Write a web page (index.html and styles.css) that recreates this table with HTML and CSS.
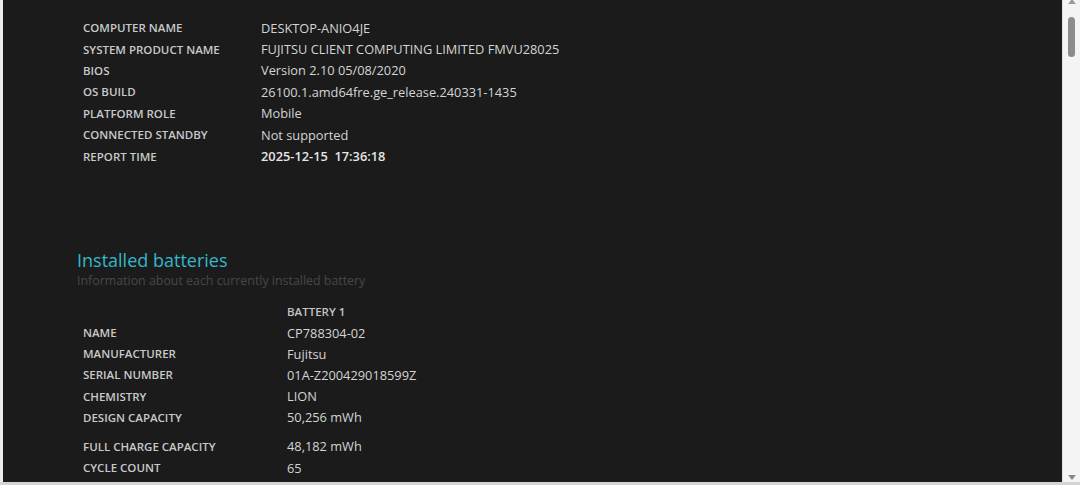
FILE: index.html
```html
<!DOCTYPE html>
<html>
<head>
<meta charset="utf-8">
<link rel="stylesheet" href="styles.css">
</head>
<body>
<div class="frame">
  <div class="page">
    <div class="info">
      <div class="label">COMPUTER NAME</div><div class="value">DESKTOP-ANIO4JE</div>
      <div class="label">SYSTEM PRODUCT NAME</div><div class="value">FUJITSU CLIENT COMPUTING LIMITED FMVU28025</div>
      <div class="label">BIOS</div><div class="value">Version 2.10 05/08/2020</div>
      <div class="label">OS BUILD</div><div class="value">26100.1.amd64fre.ge_release.240331-1435</div>
      <div class="label">PLATFORM ROLE</div><div class="value">Mobile</div>
      <div class="label">CONNECTED STANDBY</div><div class="value">Not supported</div>
      <div class="label">REPORT TIME</div><div class="value strong">2025-12-15&nbsp;&nbsp;17:36:18</div>
    </div>

    <h2 class="heading">Installed batteries</h2>
    <div class="subtitle">Information about each currently installed battery</div>

    <div class="battery">
      <div class="label"></div><div class="label colhead">BATTERY 1</div>
      <div class="label">NAME</div><div class="value">CP788304-02</div>
      <div class="label">MANUFACTURER</div><div class="value">Fujitsu</div>
      <div class="label">SERIAL NUMBER</div><div class="value">01A-Z200429018599Z</div>
      <div class="label">CHEMISTRY</div><div class="value">LION</div>
      <div class="label">DESIGN CAPACITY</div><div class="value">50,256 mWh</div>
      <div class="label gap">FULL CHARGE CAPACITY</div><div class="value gap">48,182 mWh</div>
      <div class="label">CYCLE COUNT</div><div class="value">65</div>
    </div>
  </div>
  <div class="scrollbar">
    <div class="arrow up"></div>
    <div class="track"><div class="thumb"></div></div>
    <div class="arrow down"></div>
  </div>
</div>
</body>
</html>
```

FILE: styles.css
```css
html, body {
  margin: 0;
  padding: 0;
}
body {
  background: #ececec;
  width: 1080px;
  height: 485px;
  overflow: hidden;
  font-family: "Open Sans", "Noto Sans", sans-serif;
}
.frame {
  display: flex;
  height: 482px;
  padding-left: 3px;
  border-bottom: 3px solid #d4d4d4;
}
.page {
  flex: 1;
  background: #1b1b1b;
  overflow: hidden;
  padding-top: 17px;
  box-sizing: border-box;
}
.info, .battery {
  display: grid;
  grid-template-columns: 178px auto;
  margin-left: 80px;
}
.info > div {
  height: 21.4px;
  display: flex;
  align-items: center;
  white-space: nowrap;
}
.battery > div {
  height: 21.2px;
  display: flex;
  align-items: center;
  white-space: nowrap;
}
.battery {
  grid-template-columns: 204px auto;
  margin-top: 11px;
}
.label {
  font-size: 11.5px;
  font-weight: 600;
  color: #c9c9c9;
}
.value {
  font-size: 12.8px;
  color: #d4d4d4;
}
.value.strong {
  font-weight: 600;
  color: #e6e6e6;
}
.colhead {
  color: #c4c4c4;
}
.battery > .gap {
  height: 29.2px;
  padding-top: 8px;
  box-sizing: border-box;
}
.heading {
  margin: 81px 0 0 74px;
  font-size: 18px;
  font-weight: 400;
  color: #35b7c9;
  line-height: 24px;
}
.subtitle {
  margin-left: 74px;
  font-size: 12.4px;
  color: #484848;
  line-height: 18px;
}
.scrollbar {
  width: 17px;
  background: #f4f4f4;
  display: flex;
  flex-direction: column;
  border-left: 1px solid #e2e2e2;
}
.arrow {
  height: 4px;
  display: flex;
  justify-content: center;
}
.arrow.up::before {
  content: "";
  margin-top: -3px;
  border-left: 4px solid transparent;
  border-right: 4px solid transparent;
  border-bottom: 5px solid #9a9a9a;
}
.arrow.down {
  height: 8px;
}
.arrow.down::before {
  content: "";
  margin-top: 1px;
  border-left: 4px solid transparent;
  border-right: 4px solid transparent;
  border-top: 5px solid #8a8a8a;
}
.track {
  flex: 1;
  padding-top: 13px;
  display: flex;
  justify-content: center;
}
.thumb {
  width: 7px;
  height: 40px;
  border-radius: 4px;
  background: #8c8c8c;
}
```
